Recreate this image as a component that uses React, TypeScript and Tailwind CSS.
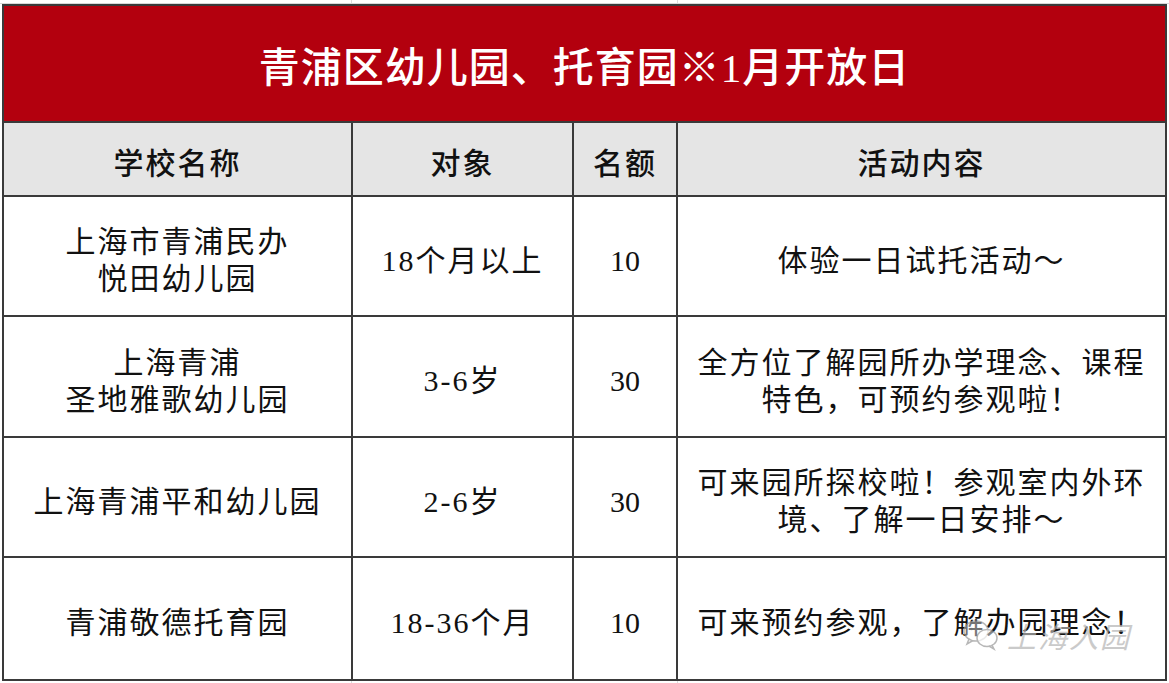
import React from "react";

interface Row {
  name: string[];
  target: string;
  quota: string;
  activity: string[];
}

const rows: Row[] = [
  {
    name: ["上海市青浦民办", "悦田幼儿园"],
    target: "18个月以上",
    quota: "10",
    activity: ["体验一日试托活动～"],
  },
  {
    name: ["上海青浦", "圣地雅歌幼儿园"],
    target: "3-6岁",
    quota: "30",
    activity: ["全方位了解园所办学理念、课程", "特色，可预约参观啦！"],
  },
  {
    name: ["上海青浦平和幼儿园"],
    target: "2-6岁",
    quota: "30",
    activity: ["可来园所探校啦！参观室内外环", "境、了解一日安排～"],
  },
  {
    name: ["青浦敬德托育园"],
    target: "18-36个月",
    quota: "10",
    activity: ["可来预约参观，了解办园理念！"],
  },
];

const font = {
  fontFamily: '"Liberation Serif", "Noto Sans CJK SC", serif',
};

function Watermark() {
  return (
    <div className="absolute right-[34px] bottom-[26px] flex items-center gap-[6px] opacity-70 pointer-events-none">
      <svg width="40" height="36" viewBox="0 0 40 36" fill="none">
        <ellipse cx="15" cy="14" rx="12" ry="10" stroke="#9a9a9a" strokeWidth="1.5" fill="rgba(255,255,255,0.6)" />
        <path d="M8 22 L6 27 L12 23.5" stroke="#9a9a9a" strokeWidth="1.5" fill="none" />
        <ellipse cx="26" cy="21" rx="10" ry="8.5" stroke="#9a9a9a" strokeWidth="1.5" fill="rgba(255,255,255,0.7)" />
        <path d="M31 28 L33 32 L28 29" stroke="#9a9a9a" strokeWidth="1.5" fill="none" />
        <circle cx="10.5" cy="12" r="1.3" fill="#9a9a9a" />
        <circle cx="18.5" cy="12" r="1.3" fill="#9a9a9a" />
      </svg>
      <span
        className="text-[29px] leading-none text-[#b5b5b5] italic"
        style={{ fontFamily: '"Noto Sans CJK SC", sans-serif' }}
      >
        上海入园
      </span>
    </div>
  );
}

export default function App() {
  return (
    <div className="w-[1169px] h-[683px] bg-white overflow-hidden text-[#111]" style={font}>
      {/* faint lines above the table */}
      <div className="grid grid-cols-[352px_326px_1fr] h-[4px] border-b border-[#d8d8d8]">
        <div className="border-r border-[#dcdcdc]" />
        <div className="border-r border-[#dcdcdc]" />
        <div />
      </div>

      <div className="ml-[2px] w-[1165px] border-2 border-[#3a3a3a]">
        {/* Title */}
        <div className="h-[117px] bg-[#b3000e] border-b-2 border-[#3a3a3a] flex items-center justify-center pt-[10px]">
          <h1 className="text-[41px] leading-none text-white tracking-[1px] font-medium">
            青浦区幼儿园、托育园※1月开放日
          </h1>
        </div>

        {/* Column headers */}
        <div className="grid grid-cols-[349px_221px_104px_487px] h-[74px] bg-[#e5e5e5] border-b-2 border-[#3a3a3a] text-[30px] tracking-[2px] font-medium">
          <div className="border-r-2 border-[#3a3a3a] flex items-center justify-center pt-[8px]">学校名称</div>
          <div className="border-r-2 border-[#3a3a3a] flex items-center justify-center pt-[8px]">对象</div>
          <div className="border-r-2 border-[#3a3a3a] flex items-center justify-center pt-[8px]">名额</div>
          <div className="flex items-center justify-center pt-[8px]">活动内容</div>
        </div>

        {/* Rows */}
        {rows.map((row, i) => (
          <div
            key={i}
            className={
              "grid grid-cols-[349px_221px_104px_487px] text-[30px] tracking-[2px] leading-[37px] " +
              (i % 2 === 0 ? "h-[120px]" : "h-[121px]") +
              (i < rows.length - 1 ? " border-b-2 border-[#3a3a3a]" : "")
            }
          >
            <div className="border-r-2 border-[#3a3a3a] flex flex-col items-center justify-center pt-[8px]">
              {row.name.map((l) => (
                <span key={l}>{l}</span>
              ))}
            </div>
            <div className="border-r-2 border-[#3a3a3a] flex items-center justify-center pt-[8px]">
              {row.target}
            </div>
            <div className="border-r-2 border-[#3a3a3a] flex items-center justify-center pt-[8px] tracking-normal">
              {row.quota}
            </div>
            <div className="relative flex flex-col items-center justify-center pt-[8px]">
              {row.activity.map((l) => (
                <span key={l} className="whitespace-nowrap">
                  {l}
                </span>
              ))}
              {i === rows.length - 1 && <Watermark />}
            </div>
          </div>
        ))}
      </div>

      {/* faint lines below the table */}
      <div className="grid grid-cols-[352px_326px_1fr] h-[4px]">
        <div className="border-r border-[#dcdcdc]" />
        <div className="border-r border-[#dcdcdc]" />
        <div />
      </div>
    </div>
  );
}
